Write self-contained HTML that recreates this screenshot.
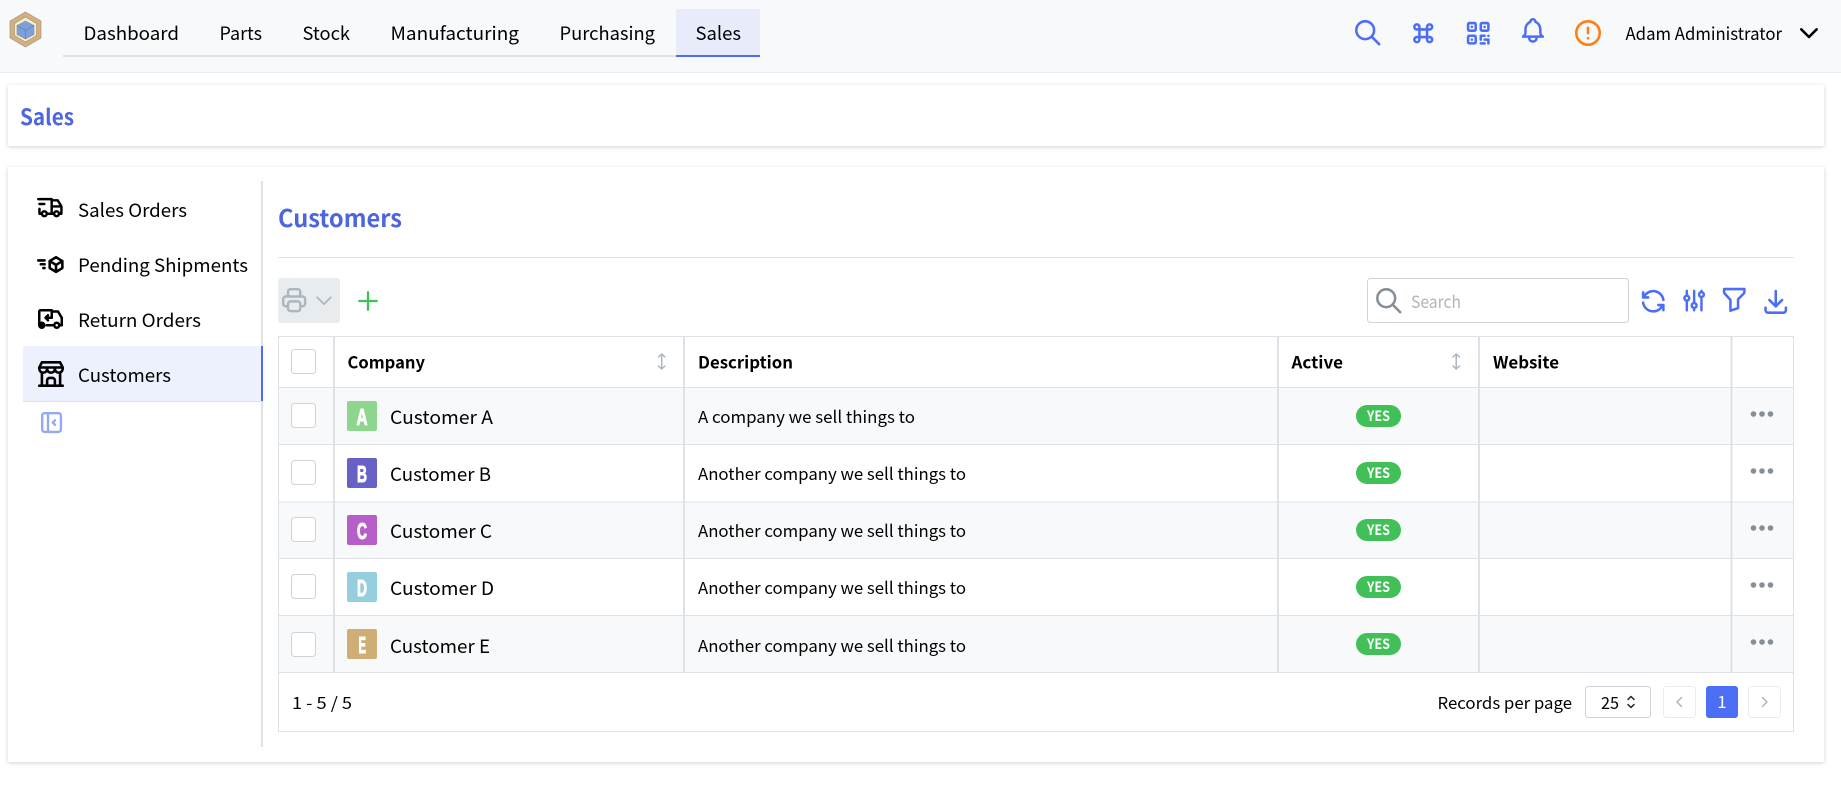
<!DOCTYPE html>
<html lang="en"><head><meta charset="utf-8"><title>Sales - Customers</title>
<style>
html,body{margin:0;padding:0;background:#fff;overflow:hidden}
svg.page{display:block}
text{font-family:"Noto Sans CJK JP","Liberation Sans",sans-serif;fill:#000}
.n{font-size:18.5px}
.s{font-size:16.5px}
.b{font-size:16.5px;font-weight:700}
.l{font-family:"Liberation Sans",sans-serif;font-weight:700;font-size:23px;fill:#fff;stroke:#fff;stroke-width:1.100px}
.y{font-size:14px;font-weight:700;fill:#fff}
.i{fill:none;stroke-linecap:round;stroke-linejoin:round;stroke-width:2}
.bl{stroke:#4c6ef5}
.k{stroke:#000}
</style></head><body>
<svg class="page" xmlns="http://www.w3.org/2000/svg" width="1841" height="786" viewBox="0 0 1841 786">
<rect width="1841" height="786" fill="#fff"/>
<!-- header -->
<rect width="1841" height="72" fill="#f8f9fa"/>
<rect y="72" width="1841" height="1" fill="#e9ecef"/>
<g stroke="#8f8f80" stroke-width=".6">
<polygon points="25.5,12 41,21 41,38 25.5,47 10,38 10,21" fill="#d9ae7c"/>
<polygon points="25.5,17 36.5,23.5 36.5,35.5 25.5,42 14.5,35.5 14.5,23.5" fill="#eef0d8"/>
<polygon points="25.5,21 34,25.5 34,34.5 25.5,39 17,34.5 17,25.5" fill="#7f9fd8"/>
<path d="M17 25.500l8.500 5l8.500-5M25.500 30.500v8.500" fill="none" stroke="#5a76b0"/>
</g>
<rect x="676" y="9" width="84" height="46" rx="2" fill="#e7ebfa"/>
<rect x="63" y="55" width="613" height="2" fill="#dee2e6"/>
<rect x="676" y="55" width="84" height="2" fill="#4c6ef5"/>
<text class="n" x="83.500" y="40" textLength="95.500" lengthAdjust="spacingAndGlyphs">Dashboard</text>
<text class="n" x="219.500" y="40" textLength="42.500" lengthAdjust="spacingAndGlyphs">Parts</text>
<text class="n" x="302.500" y="40" textLength="47.500" lengthAdjust="spacingAndGlyphs">Stock</text>
<text class="n" x="390.500" y="40" textLength="128.500" lengthAdjust="spacingAndGlyphs">Manufacturing</text>
<text class="n" x="559.500" y="40" textLength="95.500" lengthAdjust="spacingAndGlyphs">Purchasing</text>
<text class="n" x="695.500" y="40" textLength="45.500" lengthAdjust="spacingAndGlyphs">Sales</text>
<g class="i bl" transform="translate(1352.500 17.500) scale(1.27)"><path d="M10 10m-7 0a7 7 0 1 0 14 0a7 7 0 1 0 -14 0M21 21l-6 -6"/></g>
<g class="i bl" transform="translate(1408 18) scale(1.27)"><path d="M7 9a2 2 0 1 1 2 -2v10a2 2 0 1 1 -2 -2h10a2 2 0 1 1 -2 2v-10a2 2 0 1 1 2 2h-10"/></g>
<g class="i bl" transform="translate(1463 18) scale(1.27)"><path d="M4 4m0 1a1 1 0 0 1 1 -1h4a1 1 0 0 1 1 1v4a1 1 0 0 1 -1 1h-4a1 1 0 0 1 -1 -1zM7 17l0 .01M14 4m0 1a1 1 0 0 1 1 -1h4a1 1 0 0 1 1 1v4a1 1 0 0 1 -1 1h-4a1 1 0 0 1 -1 -1zM7 7l0 .01M4 14m0 1a1 1 0 0 1 1 -1h4a1 1 0 0 1 1 1v4a1 1 0 0 1 -1 1h-4a1 1 0 0 1 -1 -1zM17 7l0 .01M14 14l3 0M20 14l0 .01M14 14l0 3M14 20l3 0M17 17l3 0M20 17l0 3"/></g>
<g class="i bl" transform="translate(1518 15.500) scale(1.24)"><path d="M10 5a2 2 0 1 1 4 0a7 7 0 0 1 4 6v3a4 4 0 0 0 2 3h-16a4 4 0 0 0 2 -3v-3a7 7 0 0 1 4 -6M9 17v1a3 3 0 0 0 6 0v-1"/></g>
<g class="i" style="stroke:#fd7e14" transform="translate(1572.400 17.400) scale(1.3)"><path d="M3 12a9 9 0 1 0 18 0a9 9 0 0 0 -18 0M12 8v4M12 16h.01"/></g>
<text x="1625.500" y="40" font-size="17.500" textLength="156.500" lengthAdjust="spacingAndGlyphs">Adam Administrator</text>
<g class="i k" transform="translate(1793.600 17.800) scale(1.28)"><path d="M6 9l6 6l6 -6"/></g>

<!-- title card -->
<rect x="8" y="85" width="1816" height="61" rx="2" fill="#fff" style="filter:drop-shadow(0 1px 2px rgba(0,0,0,.18))"/>
<text x="20" y="125" font-size="22" font-weight="700" style="fill:#4b66de" textLength="54" lengthAdjust="spacingAndGlyphs">Sales</text>

<!-- main panel -->
<rect x="8" y="167" width="1816" height="595" rx="2" fill="#fff" style="filter:drop-shadow(0 1px 2px rgba(0,0,0,.18))"/>
<rect x="23" y="346" width="240" height="55" fill="#edf0fd"/>
<rect x="23" y="401" width="240" height="1" fill="#dee2e6"/>
<rect x="261" y="181" width="2" height="566" fill="#dee2e6"/>
<rect x="261" y="346" width="2" height="55" fill="#4c6ef5"/>

<g class="i k" transform="translate(35.800 193) scale(1.22)"><path d="M7 17m-2 0a2 2 0 1 0 4 0a2 2 0 1 0 -4 0M17 17m-2 0a2 2 0 1 0 4 0a2 2 0 1 0 -4 0M5 17h-2v-4m-1 -8h11v12m-4 0h6m4 0h2v-6h-8m0 -5h5l3 5M3 9l4 0"/></g>
<g class="i k" transform="translate(35.700 249) scale(1.27)"><path d="M16 12.500l-5 -3l5 -3l5 3v5.500l-5 3zM11 9.500v5.500l5 3M16 12.545l5 -3.030M7 9h-5M7 12h-3M7 15h-1"/></g>
<g class="i k" transform="translate(35.500 304) scale(1.25)"><path d="M5 17m-2 0a2 2 0 1 0 4 0a2 2 0 1 0 -4 0M17 17m-2 0a2 2 0 1 0 4 0a2 2 0 1 0 -4 0M5 17h-2v-11a1 1 0 0 1 1 -1h9v6h-5l2 2m0 -4l-2 2M9 17l6 0M13 6h5l3 5v6h-2"/></g>
<g class="i k" transform="translate(35.400 358.400) scale(1.3)"><path d="M3 21l18 0M3 7v1a3 3 0 0 0 6 0v-1m0 1a3 3 0 0 0 6 0v-1m0 1a3 3 0 0 0 6 0v-1h-18l2 -4h14l2 4M5 21l0 -10.150M19 21l0 -10.150M9 21v-4a2 2 0 0 1 2 -2h2a2 2 0 0 1 2 2v4"/></g>
<text class="n" x="78" y="217" textLength="109" lengthAdjust="spacingAndGlyphs">Sales Orders</text>
<text class="n" x="78" y="272" textLength="170" lengthAdjust="spacingAndGlyphs">Pending Shipments</text>
<text class="n" x="78" y="327" textLength="123" lengthAdjust="spacingAndGlyphs">Return Orders</text>
<text class="n" x="78" y="382" textLength="93" lengthAdjust="spacingAndGlyphs">Customers</text>
<g class="i" style="stroke:#4c6ef5;opacity:.6" transform="translate(37.500 408.500) scale(1.17)"><path d="M4 4m0 2a2 2 0 0 1 2 -2h12a2 2 0 0 1 2 2v12a2 2 0 0 1 -2 2h-12a2 2 0 0 1 -2 -2zM9 4v16M15 10l-2 2l2 2"/></g>

<!-- content header -->
<text x="278" y="227" font-size="24" font-weight="700" style="fill:#4b66de" textLength="124" lengthAdjust="spacingAndGlyphs">Customers</text>
<rect x="278" y="257" width="1516" height="1" fill="#dee2e6"/>

<!-- toolbar -->
<rect x="278" y="278" width="62" height="45" rx="3" fill="#e9ecef"/>
<g class="i" style="stroke:#adb5bd" transform="translate(279.500 285.500) scale(1.22)"><path d="M17 17h2a2 2 0 0 0 2 -2v-4a2 2 0 0 0 -2 -2h-14a2 2 0 0 0 -2 2v4a2 2 0 0 0 2 2h2M17 9v-4a2 2 0 0 0 -2 -2h-6a2 2 0 0 0 -2 2v4M7 13m0 2a2 2 0 0 1 2 -2h6a2 2 0 0 1 2 2v4a2 2 0 0 1 -2 2h-6a2 2 0 0 1 -2 -2z"/></g>
<g class="i" style="stroke:#adb5bd;stroke-width:1.500" transform="translate(310.300 287) scale(1.14)"><path d="M6 9l6 6l6 -6"/></g>
<g class="i" style="stroke:#40c057;stroke-width:1.800" transform="translate(353 286) scale(1.25)"><path d="M12 5l0 14M5 12l14 0"/></g>

<rect x="1367.500" y="278.500" width="261" height="44" rx="3" fill="#fff" stroke="#ced4da"/>
<g class="i" style="stroke:#868e96" transform="translate(1373.500 285.500) scale(1.27)"><path d="M10 10m-7 0a7 7 0 1 0 14 0a7 7 0 1 0 -14 0M21 21l-6 -6"/></g>
<text x="1411" y="308" font-size="17" style="fill:#adb5bd" textLength="50" lengthAdjust="spacingAndGlyphs">Search</text>
<g class="i bl" transform="translate(1638 286) scale(1.27)"><path d="M20 11a8.100 8.100 0 0 0 -15.500 -2m-.5 -4v4h4M4 13a8.100 8.100 0 0 0 15.500 2m.5 4v-4h-4"/></g>
<g class="i bl" transform="translate(1679.500 286) scale(1.22)"><path d="M4 10a2 2 0 1 0 4 0a2 2 0 0 0 -4 0M6 4v4M6 12v8M10 16a2 2 0 1 0 4 0a2 2 0 0 0 -4 0M12 4v10M12 18v2M16 7a2 2 0 1 0 4 0a2 2 0 0 0 -4 0M18 4v1M18 9v11"/></g>
<g class="i bl" transform="translate(1719 284) scale(1.27)"><path d="M4 4h16v2.172a2 2 0 0 1 -.586 1.414l-4.414 4.414v7l-6 2v-8.500l-4.480 -4.928a2 2 0 0 1 -.520 -1.345v-2.227z"/></g>
<g class="i bl" transform="translate(1760.500 286) scale(1.27)"><path d="M4 17v2a2 2 0 0 0 2 2h12a2 2 0 0 0 2 -2v-2M7 11l5 5l5 -5M12 4l0 12"/></g>

<!-- table -->
<rect x="278.500" y="336.500" width="1515" height="395" fill="#fff" stroke="#dee2e6"/>
<rect x="279" y="388" width="1514" height="56" fill="#f8f9fa"/>
<rect x="279" y="502" width="1514" height="56.500" fill="#f8f9fa"/>
<rect x="279" y="616" width="1514" height="56" fill="#f8f9fa"/>
<g fill="#dee2e6">
<rect x="279" y="387" width="1514" height="1"/>
<rect x="279" y="444" width="1514" height="1"/>
<rect x="279" y="501.500" width="1514" height="1"/>
<rect x="279" y="558" width="1514" height="1"/>
<rect x="279" y="615" width="1514" height="1"/>
<rect x="279" y="672" width="1514" height="1"/>
<rect x="333" y="337" width="2" height="335"/>
<rect x="683" y="337" width="2" height="335"/>
<rect x="1277" y="337" width="2" height="335"/>
<rect x="1478" y="337" width="2" height="335"/>
<rect x="1730.500" y="337" width="2" height="335"/>
</g>
<text class="b" x="347.500" y="368.500" textLength="77.500" lengthAdjust="spacingAndGlyphs">Company</text>
<text class="b" x="698" y="368.500" textLength="95" lengthAdjust="spacingAndGlyphs">Description</text>
<text class="b" x="1291.500" y="368.500" textLength="51.500" lengthAdjust="spacingAndGlyphs">Active</text>
<text class="b" x="1493" y="368.500" textLength="66" lengthAdjust="spacingAndGlyphs">Website</text>
<path class="i" style="stroke:#adb5bd;stroke-width:1.500" d="M658.500 357l3.200-3 3.200 3M661.700 354v15M658.500 366l3.200 3 3.200-3"/>
<path class="i" style="stroke:#adb5bd;stroke-width:1.500" d="M1453 357l3.200-3 3.200 3M1456.200 354v15M1453 366l3.200 3 3.200-3"/>

<g fill="#fff" stroke="#ced4da">
<rect x="291.500" y="349.500" width="24" height="24" rx="3"/>
<rect x="291.500" y="403.500" width="24" height="24" rx="3"/>
<rect x="291.500" y="460.500" width="24" height="24" rx="3"/>
<rect x="291.500" y="517.500" width="24" height="24" rx="3"/>
<rect x="291.500" y="574.500" width="24" height="24" rx="3"/>
<rect x="291.500" y="632.500" width="24" height="24" rx="3"/>
</g>
<rect x="347" y="401" width="30" height="30" rx="2" fill="#8ed58d"/>
<rect x="347" y="458" width="30" height="30" rx="2" fill="#6761c6"/>
<rect x="347" y="515" width="30" height="30" rx="2" fill="#b65fc8"/>
<rect x="347" y="572" width="30" height="30" rx="2" fill="#95cfdf"/>
<rect x="347" y="629" width="30" height="30" rx="2" fill="#cfae76"/>
<text class="l" x="356.500" y="425" textLength="11" lengthAdjust="spacingAndGlyphs">A</text>
<text class="l" x="357" y="482" textLength="10" lengthAdjust="spacingAndGlyphs">B</text>
<text class="l" x="357" y="539" textLength="10" lengthAdjust="spacingAndGlyphs">C</text>
<text class="l" x="357" y="596" textLength="10" lengthAdjust="spacingAndGlyphs">D</text>
<text class="l" x="358.500" y="653" textLength="7.500" lengthAdjust="spacingAndGlyphs">E</text>

<text class="n" x="390" y="424" textLength="103" lengthAdjust="spacingAndGlyphs">Customer A</text>
<text class="n" x="390" y="481" textLength="101" lengthAdjust="spacingAndGlyphs">Customer B</text>
<text class="n" x="390" y="538" textLength="102" lengthAdjust="spacingAndGlyphs">Customer C</text>
<text class="n" x="390" y="595" textLength="104" lengthAdjust="spacingAndGlyphs">Customer D</text>
<text class="n" x="390" y="653" textLength="100" lengthAdjust="spacingAndGlyphs">Customer E</text>

<text class="s" x="698" y="423" textLength="217" lengthAdjust="spacingAndGlyphs">A company we sell things to</text>
<text class="s" x="698" y="480" textLength="268" lengthAdjust="spacingAndGlyphs">Another company we sell things to</text>
<text class="s" x="698" y="537" textLength="268" lengthAdjust="spacingAndGlyphs">Another company we sell things to</text>
<text class="s" x="698" y="594" textLength="268" lengthAdjust="spacingAndGlyphs">Another company we sell things to</text>
<text class="s" x="698" y="652" textLength="268" lengthAdjust="spacingAndGlyphs">Another company we sell things to</text>

<g fill="#40c057">
<rect x="1356" y="405" width="45" height="22" rx="11"/>
<rect x="1356" y="462" width="45" height="22" rx="11"/>
<rect x="1356" y="519" width="45" height="22" rx="11"/>
<rect x="1356" y="576" width="45" height="22" rx="11"/>
<rect x="1356" y="633" width="45" height="22" rx="11"/>
</g>
<text class="y" x="1367" y="421" textLength="23" lengthAdjust="spacingAndGlyphs">YES</text>
<text class="y" x="1367" y="478" textLength="23" lengthAdjust="spacingAndGlyphs">YES</text>
<text class="y" x="1367" y="535" textLength="23" lengthAdjust="spacingAndGlyphs">YES</text>
<text class="y" x="1367" y="592" textLength="23" lengthAdjust="spacingAndGlyphs">YES</text>
<text class="y" x="1367" y="649" textLength="23" lengthAdjust="spacingAndGlyphs">YES</text>

<g fill="#868e96">
<circle cx="1753.500" cy="414" r="2.800"/><circle cx="1762" cy="414" r="2.800"/><circle cx="1770.500" cy="414" r="2.800"/>
<circle cx="1753.500" cy="471" r="2.800"/><circle cx="1762" cy="471" r="2.800"/><circle cx="1770.500" cy="471" r="2.800"/>
<circle cx="1753.500" cy="528" r="2.800"/><circle cx="1762" cy="528" r="2.800"/><circle cx="1770.500" cy="528" r="2.800"/>
<circle cx="1753.500" cy="585" r="2.800"/><circle cx="1762" cy="585" r="2.800"/><circle cx="1770.500" cy="585" r="2.800"/>
<circle cx="1753.500" cy="642" r="2.800"/><circle cx="1762" cy="642" r="2.800"/><circle cx="1770.500" cy="642" r="2.800"/>
</g>

<!-- footer -->
<text class="s" x="292" y="709" textLength="60" lengthAdjust="spacingAndGlyphs">1 - 5 / 5</text>
<text class="s" x="1437.500" y="709" textLength="134.500" lengthAdjust="spacingAndGlyphs">Records per page</text>
<rect x="1585.500" y="686.500" width="65" height="31" rx="3" fill="#fff" stroke="#ced4da"/>
<text class="s" x="1601" y="709" textLength="18" lengthAdjust="spacingAndGlyphs">25</text>
<path class="i" style="stroke:#212529;stroke-width:1.500" d="M1628 699.500l3-3 3 3M1628 704.500l3 3 3-3"/>
<rect x="1663.500" y="686.500" width="32" height="31" rx="3" fill="#fff" stroke="#e9ecef"/>
<path class="i" style="stroke:#adb5bd;stroke-width:1.500" d="M1681.500 697.500l-4.500 4.500 4.500 4.500"/>
<rect x="1706" y="686" width="32" height="32" rx="3" fill="#4c6ef5"/>
<text x="1722" y="708" font-size="17" text-anchor="middle" style="fill:#fff">1</text>
<rect x="1748.500" y="686.500" width="32" height="31" rx="3" fill="#fff" stroke="#e9ecef"/>
<path class="i" style="stroke:#adb5bd;stroke-width:1.500" d="M1762.500 697.500l4.500 4.500-4.500 4.500"/>
</svg>
</body></html>
